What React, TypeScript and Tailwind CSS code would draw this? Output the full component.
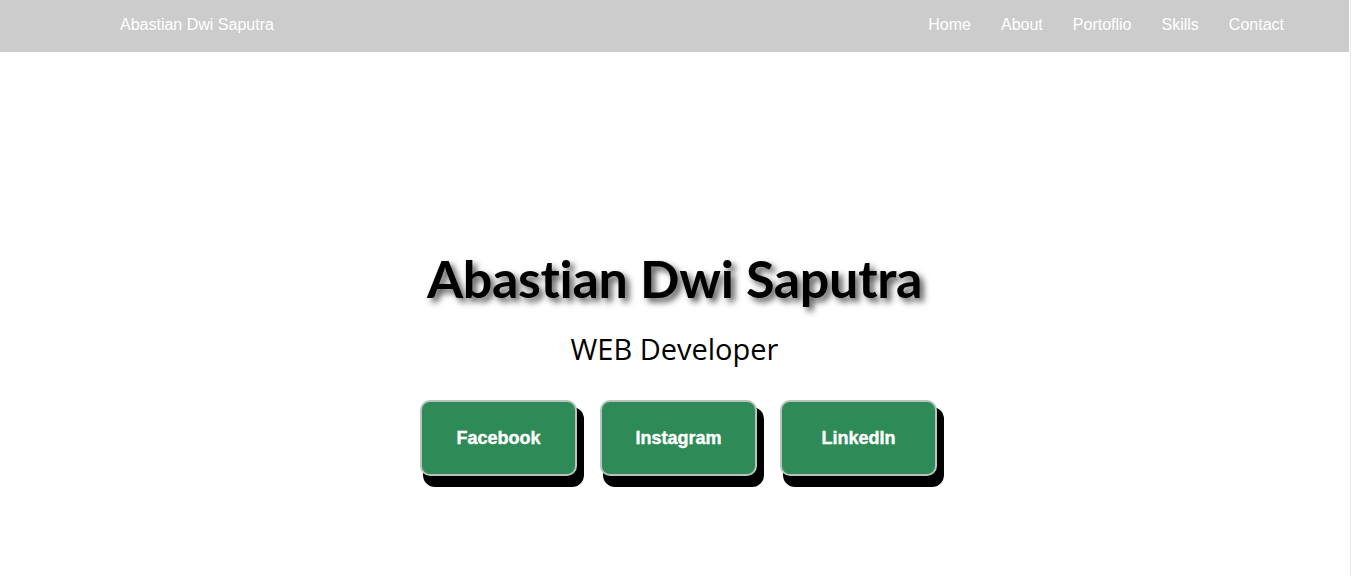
export default function App() {
  const links = ["Home", "About", "Portoflio", "Skills", "Contact"];
  const socials = ["Facebook", "Instagram", "LinkedIn"];

  return (
    <div className="flex min-h-[576px] bg-white">
      <div className="flex-1">
        <nav className="flex h-[52px] items-center justify-between bg-[#cccccc] pb-[2px] pl-[120px] pr-[65px] font-['Liberation_Sans',Arial,sans-serif] text-[16px] text-white">
          <a href="#">Abastian Dwi Saputra</a>
          <ul className="flex gap-[30px]">
            {links.map((l) => (
              <li key={l}>
                <a href="#">{l}</a>
              </li>
            ))}
          </ul>
        </nav>

        <section className="flex flex-col items-center pt-[194px]">
          <h1 className="font-['Lato',sans-serif] text-[52px] font-bold leading-[64px] tracking-[-0.3px] text-black [text-shadow:4px_4px_6px_#555]">
            Abastian Dwi Saputra
          </h1>
          <p className="mt-[19px] font-['Open_Sans',sans-serif] text-[29px] leading-[40px] text-black">
            WEB Developer
          </p>
          <div className="ml-[8px] mt-[31px] flex gap-[23px]">
            {socials.map((s) => (
              <a
                key={s}
                href="#"
                className="flex h-[76px] w-[157px] items-center justify-center rounded-[10px] border-2 border-[#b8c4bb] bg-[#2e8b57] font-['Liberation_Sans',Arial,sans-serif] text-[18px] font-bold text-white shadow-[5px_9px_0_2px_#000] [-webkit-text-stroke:0.4px_white]"
              >
                {s}
              </a>
            ))}
          </div>
        </section>
      </div>
      <div className="w-[2px] border-l border-white bg-[#e8e8e8]" />
    </div>
  );
}
